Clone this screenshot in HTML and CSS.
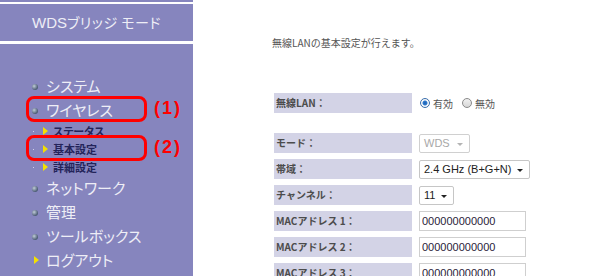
FILE: index.html
```html
<!DOCTYPE html>
<html lang="ja">
<head>
    <meta charset="UTF-8">
    <title>WDSブリッジ モード</title>
    <link rel="stylesheet" href="styles.css">
</head>
<body>
    <div class="page">
        <div class="side">
            <div class="title"><span class="latin">WDS</span>ブリッジ モード</div>
            <ul class="menu">
                <li class="item">システム</li>
                <li class="item">ワイヤレス</li>
                <li class="sub">ステータス</li>
                <li class="sub">基本設定</li>
                <li class="sub">詳細設定</li>
                <li class="item">ネットワーク</li>
                <li class="item">管理</li>
                <li class="item">ツールボックス</li>
                <li class="item logout">ログアウト</li>
            </ul>
            <div class="mark mark1"></div>
            <div class="mark mark2"></div>
            <div class="num num1">(1)</div>
            <div class="num num2">(2)</div>
        </div>
        <div class="main">
            <p class="intro">無線LANの基本設定が行えます。</p>
            <div class="form">
                <div class="label">無線LAN：</div>
                <div class="ctrl">
                    <span class="radio on"></span><span class="opt">有効</span>
                    <span class="radio"></span><span class="opt">無効</span>
                </div>
                <div class="spacer"></div>
                <div class="label">モード：</div>
                <div class="ctrl"><span class="select off">WDS</span></div>
                <div class="label">帯域：</div>
                <div class="ctrl"><span class="select">2.4 GHz (B+G+N)</span></div>
                <div class="label">チャンネル：</div>
                <div class="ctrl"><span class="select">11</span></div>
                <div class="label">MACアドレス 1：</div>
                <div class="ctrl"><input class="field" type="text" value="000000000000"></div>
                <div class="label">MACアドレス 2：</div>
                <div class="ctrl"><input class="field" type="text" value="000000000000"></div>
                <div class="label">MACアドレス 3：</div>
                <div class="ctrl"><input class="field" type="text" value="000000000000"></div>
            </div>
        </div>
    </div>
</body>
</html>
```

FILE: styles.css
```css
*{
    margin:0;
    padding:0;
    box-sizing:border-box;
}
body{
    background:#fff;
    font-family:"Liberation Sans","Noto Sans CJK JP",sans-serif;
    overflow:hidden;
}
.page{
    display:flex;
    height:276px;
}
.side{
    position:relative;
    width:193px;
    flex:none;
    background:#8685be;
    padding-top:2px;
    font-family:"Noto Sans CJK JP",sans-serif;
    font-feature-settings:"palt" 1;
}
.title{
    height:42px;
    border-top:2px solid #fff;
    border-bottom:3px solid #fff;
    text-align:center;
    line-height:36px;
    color:#eeeef6;
    font-size:14px;
    letter-spacing:0.5px;
}
.latin{
    font-family:"Liberation Sans",sans-serif;
    font-size:15px;
    letter-spacing:0;
}
.menu{
    list-style:none;
    padding-top:30px;
}
.item{
    position:relative;
    height:24px;
    line-height:24px;
    padding-left:46px;
    font-size:15px;
    color:#eeeef6;
}
.item::before{
    content:"";
    position:absolute;
    left:32px;
    top:10px;
    width:6px;
    height:6px;
    border-radius:50%;
    background:radial-gradient(circle at 35% 35%,#c0ccd8,#4a5a72 70%);
}
.sub{
    position:relative;
    height:18px;
    line-height:18px;
    padding-left:53px;
    font-size:11px;
    font-weight:bold;
    color:#24245a;
}
.sub::before{
    content:"";
    position:absolute;
    left:33px;
    top:9px;
    width:1px;
    height:1px;
    background:#d0d0e8;
}
.sub::after,
.logout::before{
    content:"";
    position:absolute;
    left:43px;
    top:5px;
    width:0;
    height:0;
    border-top:4px solid transparent;
    border-bottom:4px solid transparent;
    border-left:5px solid #f4e000;
}
.logout::before{
    left:34px;
    top:8px;
    border-radius:0;
    background:none;
}
.mark{
    position:absolute;
    left:26px;
    width:121px;
    height:26px;
    border:3px solid #ff0000;
    border-radius:8px;
}
.mark1{
    top:96px;
}
.mark2{
    top:135px;
}
.num{
    position:absolute;
    left:154px;
    font-family:"Liberation Sans",sans-serif;
    font-size:18px;
    font-weight:bold;
    letter-spacing:2px;
    color:#ff0000;
    line-height:20px;
}
.num1{
    top:98px;
}
.num2{
    top:137px;
}
.main{
    flex:1;
    padding:36px 0 0 79px;
}
.intro{
    font-family:"Noto Sans CJK JP",sans-serif;
    font-size:10px;
    line-height:14px;
    color:#555;
}
.form{
    display:grid;
    grid-template-columns:138px auto;
    grid-template-rows:20px 8px repeat(6,20px);
    column-gap:7px;
    row-gap:6px;
    margin:43px 0 0 2px;
}
.spacer{
    grid-column:1 / -1;
}
.label{
    background:#d3d3e6;
    padding-left:2px;
    font-family:"Noto Sans CJK JP",sans-serif;
    font-size:10px;
    font-weight:bold;
    line-height:20px;
    color:#4c4c4c;
}
.ctrl{
    display:flex;
    align-items:center;
}
.radio{
    width:10px;
    height:10px;
    border-radius:50%;
    border:1px solid #8a8a8a;
    background:linear-gradient(#f0f0f0,#d6d6d6);
    margin-left:1px;
}
.radio.on{
    background:radial-gradient(circle,#1d5fae 0,#2f7bd0 2px,#fff 3px,#e6e6e6 5px);
    border-color:#3a6fae;
}
.opt{
    font-family:"Noto Sans CJK JP",sans-serif;
    font-size:10px;
    color:#555;
    margin:0 8px 0 3px;
}
.select{
    position:relative;
    height:19px;
    line-height:17px;
    padding:0 18px 0 4px;
    border:1px solid #c6c6c6;
    border-radius:2px;
    background:#fff;
    font-size:11px;
    color:#222;
}
.select::after{
    content:"";
    position:absolute;
    right:6px;
    top:8px;
    border-left:3px solid transparent;
    border-right:3px solid transparent;
    border-top:3px solid #222;
}
.select.off{
    color:#a8a8a8;
    border-color:#d0d0d0;
    padding-right:19px;
}
.select.off::after{
    border-top-color:#b4b4b4;
}
.field{
    width:107px;
    height:20px;
    border:1px solid #cfcfcf;
    padding-left:2px;
    font-family:"Liberation Sans",sans-serif;
    font-size:11px;
    color:#2a2238;
    outline:none;
}
```
